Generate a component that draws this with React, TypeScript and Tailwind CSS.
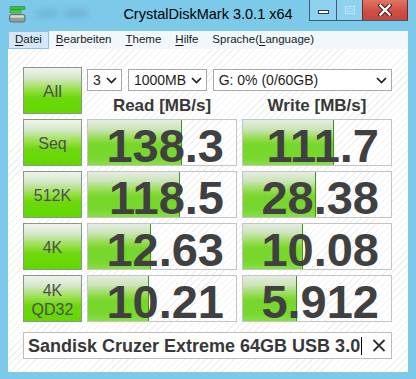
import React from 'react';

type Row = {
  label: React.ReactNode;
  read: string;
  readBar: number;
  write: string;
  writeBar: number;
};

const ROWS: Row[] = [
  { label: 'Seq', read: '138.3', readBar: 94, write: '111.7', writeBar: 91 },
  { label: '512K', read: '118.5', readBar: 92, write: '28.38', writeBar: 73 },
  { label: '4K', read: '12.63', readBar: 63, write: '10.08', writeBar: 60 },
  {
    label: (
      <span className="flex flex-col items-center leading-[19px]">
        <span>4K</span>
        <span>QD32</span>
      </span>
    ),
    read: '10.21',
    readBar: 61,
    write: '5.912',
    writeBar: 54,
  },
];

const STRIPES =
  'bg-[repeating-linear-gradient(135deg,#ffffff_0px,#ffffff_4px,#f1f1f1_4px,#f1f1f1_5px)]';

function AppIcon() {
  return (
    <svg width="17" height="17" viewBox="0 0 17 17">
      <rect x="1" y="0.5" width="15" height="3" rx="0.5" fill="#3fbf3f" stroke="#2a8a2a" strokeWidth="0.6" />
      <rect x="1" y="4" width="11" height="3" rx="0.5" fill="#4fcf4f" stroke="#2a8a2a" strokeWidth="0.6" />
      <rect x="0.5" y="8.5" width="15.5" height="7.5" rx="2" fill="#9a9a9a" stroke="#5a5a5a" strokeWidth="0.8" />
      <rect x="1.5" y="9.2" width="13.5" height="2.6" rx="1" fill="#d8d8d8" />
      <rect x="11.5" y="12.4" width="2.5" height="2" fill="#46e046" />
    </svg>
  );
}

function Chevron() {
  return (
    <svg width="11" height="7" viewBox="0 0 11 7" className="shrink-0">
      <path d="M1 1 L5.5 5.5 L10 1" fill="none" stroke="#1e1e1e" strokeWidth="1.7" />
    </svg>
  );
}

function Select({ value, width }: { value: string; width: string }) {
  return (
    <div
      className={`${width} h-[22px] border border-[#a8a8a8] bg-white flex items-center justify-between pl-[5px] pr-[4px] text-[14px] text-[#1e1e1e]`}
    >
      <span>{value}</span>
      <Chevron />
    </div>
  );
}

function LabelButton({ children, big }: { children: React.ReactNode; big?: boolean }) {
  return (
    <div
      className={`border border-[#8a988a] bg-[linear-gradient(to_bottom,#f0f3ee_0%,#d4e8c8_22%,#98e04c_48%,#6ed80e_65%,#62d800_100%)] flex items-center justify-center pt-[3px] text-[#4e4e4e] ${
        big ? 'text-[17px]' : 'text-[16px]'
      }`}
    >
      {children}
    </div>
  );
}

function ValueBox({ value, bar }: { value: string; bar: number }) {
  return (
    <div className={`relative border border-[#c4c4c4] ${STRIPES}`}>
      <div
        className="absolute left-0 top-0 bottom-0 border-r border-[#3f8f24] bg-[linear-gradient(to_bottom,#e6ece4_0%,#c8e4b2_22%,#92dc4c_42%,#76d62a_55%,#78d82e_85%,#8ade48_100%)]"
        style={{ width: bar }}
      />
      <div className="relative h-full text-right pr-[12px] translate-y-[3px] font-bold text-[47px] leading-[45px] text-[#404040] whitespace-nowrap">
        {value}
      </div>
    </div>
  );
}

export default function App() {
  return (
    <div className="w-[416px] h-[379px] bg-[#7cc9ea] flex flex-col font-['Liberation_Sans',Arial,sans-serif] overflow-hidden">
      {/* title bar */}
      <div className="h-[31px] grid grid-cols-[1fr_auto_1fr]">
        <div className="flex items-start pl-[9px] pt-[6px] gap-[10px]">
          <AppIcon />
          <div className="flex gap-[6px] pt-[4px]">
            <div className="w-[22px] h-[7px] rounded-full bg-[#5aa6cc]/60 blur-[3px]" />
            <div className="w-[24px] h-[7px] rounded-full bg-[#6a9cc0]/60 blur-[3px]" />
          </div>
        </div>
        <div className="pt-[7px] text-[14.5px] text-black leading-none whitespace-nowrap">
          CrystalDiskMark 3.0.1 x64
        </div>
        <div className="flex justify-end items-start pr-[8px]">
          <div className="flex h-[21px] border-b border-[#3d5d74]">
            <div className="w-[27px] border-l border-[#3d5d74] bg-[#8fd2ef] flex items-center justify-center pt-[3px]">
              <div className="w-[11px] h-[4px] bg-white border border-[#2c3e4c]" />
            </div>
            <div className="w-[26px] border-l border-[#3d5d74] bg-[#8fd2ef] flex items-center justify-center">
              <div className="w-[10px] h-[8px] border border-[#bfe4f4] flex items-center justify-center">
                <div className="w-[6px] h-[4px] border border-[#a9dbf1]" />
              </div>
            </div>
            <div className="w-[46px] border-x border-[#6e2a25] bg-[linear-gradient(to_bottom,#e27468_0%,#cf4f45_55%,#c7463c_100%)] flex items-center justify-center">
              <svg width="14" height="12" viewBox="0 0 14 12">
                <path d="M2.5 1.5 L11.5 10.5 M11.5 1.5 L2.5 10.5" stroke="#3a1410" strokeWidth="4.2" strokeLinecap="square" />
                <path d="M2.5 1.5 L11.5 10.5 M11.5 1.5 L2.5 10.5" stroke="#ffffff" strokeWidth="2.4" strokeLinecap="square" />
              </svg>
            </div>
          </div>
        </div>
      </div>

      {/* menu bar */}
      <div className="mx-[8px] h-[18px] bg-[#f2f7fc] flex text-[11.5px] text-[#1a1a1a] leading-none">
        <div className="px-[6px] flex items-center bg-[#d6e7f9] border border-[#8fbfef]">
          <span><u className="underline-offset-2">D</u>atei</span>
        </div>
        <div className="px-[7px] flex items-center">
          <span><u className="underline-offset-2">B</u>earbeiten</span>
        </div>
        <div className="px-[7px] flex items-center">
          <span><u className="underline-offset-2">T</u>heme</span>
        </div>
        <div className="px-[7px] flex items-center">
          <span><u className="underline-offset-2">H</u>ilfe</span>
        </div>
        <div className="px-[7px] flex items-center">
          <span>Sprache(<u className="underline-offset-2">L</u>anguage)</span>
        </div>
      </div>

      {/* client area */}
      <div className={`mx-[8px] mb-[7px] flex-1 pt-[18px] pl-[15px] ${STRIPES}`}>
        <div className="grid grid-cols-[59px_150px_150px] auto-rows-[47px] gap-[5px]">
          <LabelButton big>All</LabelButton>
          <div className="col-span-2 flex flex-col pt-[2px]">
            <div className="flex gap-[6px]">
              <Select value="3" width="w-[35px]" />
              <Select value="1000MB" width="w-[79px]" />
              <Select value="G: 0% (0/60GB)" width="w-[180px]" />
            </div>
            <div className="flex-1 grid grid-cols-2 gap-[5px] font-bold text-[17px] text-[#383838]">
              <div className="flex items-center justify-center pt-[2px]">Read [MB/s]</div>
              <div className="flex items-center justify-center pt-[2px]">Write [MB/s]</div>
            </div>
          </div>

          {ROWS.map((r, i) => (
            <React.Fragment key={i}>
              <LabelButton>{r.label}</LabelButton>
              <ValueBox value={r.read} bar={r.readBar} />
              <ValueBox value={r.write} bar={r.writeBar} />
            </React.Fragment>
          ))}
        </div>

        <div className="mt-[10px] w-[369px] h-[27px] border border-[#bcbcbc] bg-white flex items-center pl-[4px] pr-[5px]">
          <span className="font-bold text-[18px] text-[#383838] leading-none whitespace-nowrap">
            Sandisk Cruzer Extreme 64GB USB 3.0
          </span>
          <div className="w-[1px] h-[18px] bg-black ml-[1px]" />
          <div className="flex-1" />
          <svg width="14" height="13" viewBox="0 0 14 13">
            <path d="M1.5 1 L12.5 12 M12.5 1 L1.5 12" stroke="#2e2e2e" strokeWidth="1.8" />
          </svg>
        </div>
      </div>
    </div>
  );
}
